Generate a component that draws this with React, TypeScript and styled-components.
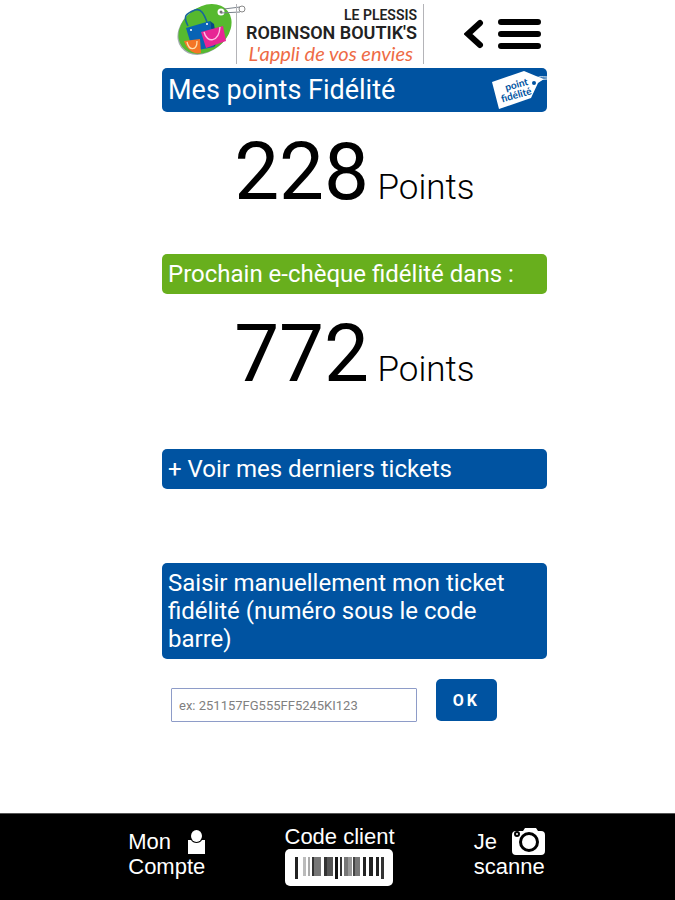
import React from 'react';
import styled, { createGlobalStyle } from 'styled-components';

const BLUE = '#0053a1';
const GREEN = '#68af1d';

const GlobalStyle = createGlobalStyle`
  *, *::before, *::after { box-sizing: border-box; }
  body {
    margin: 0;
    background: #fff;
    color: #000;
    font-family: Roboto, "Liberation Sans", sans-serif;
  }
  svg { display: block; flex: none; }
`;

const Page = styled.div`
  display: flex;
  flex-direction: column;
  min-height: 100vh;
`;

const Content = styled.div`
  margin: 0 19% 0 24%;
`;

const Header = styled.header`
  display: flex;
  align-items: center;
  justify-content: space-between;
  height: 68px;
  padding: 0 6px 0 12px;
`;

const Brand = styled.a`
  display: flex;
  align-items: center;
  color: #222;
  text-decoration: none;
`;

const BrandText = styled.span`
  display: flex;
  flex-direction: column;
  align-items: flex-end;
  height: 60px;
  margin-left: -10px;
  padding: 3px 6px 0 9px;
  border: solid #b4b4b8;
  border-width: 0 1px;
  white-space: nowrap;
`;

const BrandTop = styled.span`
  font-size: 14px;
  line-height: 16px;
  font-weight: 600;
`;

const BrandName = styled.span`
  font-size: 18px;
  line-height: 20px;
  font-weight: 600;
`;

const BrandSlogan = styled.span`
  padding-right: 4px;
  color: #ee6b45;
  font-family: Lato, sans-serif;
  font-size: 20px;
  line-height: 20px;
  font-style: italic;
`;

const HeaderActions = styled.div`
  display: flex;
  align-items: center;
  gap: 14px;
`;

const IconButton = styled.button`
  padding: 0;
  border: 0;
  background: none;
  color: #000;
  cursor: pointer;
`;

const Banner = styled.h2<{ $color?: string; $large?: boolean }>`
  display: flex;
  align-items: center;
  justify-content: space-between;
  margin: 0;
  padding: ${p => (p.$large ? '0 0 0 6px' : '6px')};
  min-height: ${p => (p.$large ? '44px' : '40px')};
  border-radius: 5px;
  background: ${p => p.$color ?? BLUE};
  color: #fff;
  font-size: ${p => (p.$large ? '27px' : '24px')};
  line-height: 28px;
  font-weight: 400;
`;

const TicketsButton = styled.button`
  display: block;
  width: 100%;
  height: 40px;
  margin-bottom: 74px;
  padding: 0 6px;
  border: 0;
  border-radius: 5px;
  background: ${BLUE};
  color: #fff;
  font: inherit;
  font-size: 24px;
  line-height: 28px;
  text-align: left;
  cursor: pointer;
`;

const Score = styled.p<{ $space: number }>`
  margin: 0;
  height: ${p => p.$space}px;
  padding-top: 13px;
  text-align: center;
  font-size: 35px;
  line-height: 94px;
  font-weight: 300;
  white-space: nowrap;
`;

const ScoreValue = styled.span`
  font-size: 80px;
  font-weight: 400;
`;

const Form = styled.form`
  display: flex;
  align-items: flex-start;
  gap: 19px;
  margin-top: 20px;
  padding: 0 50px 0 9px;
`;

const TicketInput = styled.input`
  flex: 1;
  min-width: 0;
  height: 34px;
  margin-top: 9px;
  padding: 0 7px;
  border: 1px solid #8e9cc8;
  border-radius: 1px;
  font: inherit;
  font-size: 13px;
  &::placeholder { color: #808080; opacity: 1; }
`;

const OkButton = styled.button`
  width: 61px;
  height: 42px;
  padding: 0;
  border: 0;
  border-radius: 5px;
  background: ${BLUE};
  color: #fff;
  font: inherit;
  font-size: 16px;
  font-weight: 700;
  letter-spacing: 3px;
  cursor: pointer;
`;

const Footer = styled.footer`
  display: flex;
  justify-content: space-between;
  align-items: flex-start;
  height: 87px;
  margin-top: auto;
  padding: 10px calc(19% + 2px) 0 19%;
  border-top: 1px solid #555;
  background: #000;
`;

const FooterLink = styled.a`
  display: flex;
  flex-direction: column;
  color: #fff;
  font-family: "Liberation Sans", Arial, sans-serif;
  font-size: 22px;
  line-height: 25px;
  text-decoration: none;
`;

const FooterLine = styled.span`
  display: flex;
  align-items: center;
  justify-content: space-between;
  height: 25px;
`;

const SideLink = styled(FooterLink)`
  padding-top: 5px;
`;

const LogoMark = () => (
  <svg width="72" height="60" viewBox="0 0 72 60" aria-hidden="true">
    <ellipse cx="30" cy="26" rx="29" ry="22" transform="rotate(-38 30 26)" fill="#a3adb2" />
    <ellipse cx="31" cy="25" rx="29" ry="22" transform="rotate(-38 31 25)" fill="#56b92f" />
    <path d="M14 22C9 12 11 10 21 6c6-2 9 4 12 12" fill="none" stroke="#17669a" strokeWidth="1.6" />
    <path d="M12 24l24-7 4 26-21 4z" fill="#0863b4" />
    <path d="M36 17l4 26 3-4-3-19z" fill="#064887" />
    <path d="M27 28l22-6 3 15-20 7z" fill="#e72694" />
    <path d="M30 28c3 12 15 10 16-5" fill="none" stroke="#ffc0e5" strokeWidth="1.4" />
    <path d="M10 37l16-2 1 14c-7 2-14-3-17-12z" fill="#f47525" />
    <path d="M13 38c2 9 10 9 10-1" fill="none" stroke="#ffe0ae" strokeWidth="1.3" />
    <circle cx="17" cy="26" r="1" fill="#fff" />
    <circle cx="33" cy="20" r="1" fill="#fff" />
    <circle cx="47" cy="8" r="3.5" fill="#fff" />
    <path d="M47 9l19-1M50 5l16-2" fill="none" stroke="#79818a" strokeWidth="1" />
    <circle cx="47" cy="8" r="1.5" fill="#777" />
    <circle cx="68" cy="5" r="3" fill="#fff" stroke="#888" strokeWidth="1" />
  </svg>
);

const FidelityTag = () => (
  <svg width="57" height="44" viewBox="0 0 57 44" role="img" aria-label="point fidélité">
    <path d="M2 14L34 3l12 5 8 3-6 4-7 15-32 11z" fill="#fff" />
    <circle cx="44" cy="15" r="2" fill={BLUE} />
    <path d="M47 10c3-2 5-1 10-1M47 14c3-2 5-3 10-3" fill="none" stroke="#fff" strokeWidth="1" />
    <g transform="rotate(-16 27 22)" fill={BLUE} fontFamily="Lato, sans-serif" fontWeight="700" textAnchor="middle">
      <text x="28" y="20" fontSize="10">point</text>
      <text x="25" y="30" fontSize="10">fidélité</text>
    </g>
  </svg>
);

const BackIcon = () => (
  <svg width="20" height="30" viewBox="0 0 20 30" aria-hidden="true">
    <path d="M16 4L4 15l12 11" fill="none" stroke="currentColor" strokeWidth="6" strokeLinecap="round" strokeLinejoin="miter" />
  </svg>
);

const MenuIcon = () => (
  <svg width="43" height="32" viewBox="0 0 43 32" aria-hidden="true">
    <path d="M3 4h37M3 16h37M3 28h37" stroke="currentColor" strokeWidth="6" strokeLinecap="round" />
  </svg>
);

const PersonIcon = () => (
  <svg width="17" height="24" viewBox="0 0 17 24" aria-hidden="true">
    <path d="M0 10h3c2 4 9 4 11 0h3v14H0z" fill="#fff" />
    <ellipse cx="8.500" cy="6" rx="5.500" ry="6" fill="#fff" />
  </svg>
);

const CameraIcon = () => (
  <svg width="33" height="28" viewBox="0 0 33 28" aria-hidden="true">
    <path d="M4 3h7l2-3h11l2 3h3q4 0 4 4v16q0 4-4 4H4q-4 0-4-4V7q0-4 4-4z" fill="#fff" />
    <circle cx="17" cy="14" r="8.500" fill="#fff" stroke="#000" strokeWidth="3" />
    <circle cx="5" cy="6" r="2" fill="#fff" stroke="#000" strokeWidth="2" />
  </svg>
);

const BARS: [number, number, string][] = [
  [10, 3, '#222'], [18, 3, '#bbb'], [23, 2, '#aaa'], [27, 2, '#333'], [29, 7, '#777'],
  [39, 3, '#333'], [42, 6, '#555'], [50, 3, '#111'], [55, 2, '#333'], [59, 4, '#777'],
  [63, 4, '#999'], [68, 2, '#444'], [70, 5, '#777'], [78, 3, '#222'], [84, 4, '#222'],
  [91, 3, '#222'], [96, 3, '#333'],
];

const Barcode = () => (
  <svg width="108" height="37" viewBox="0 0 108 37" aria-hidden="true">
    <rect width="108" height="37" rx="5" fill="#fff" />
    {BARS.map(([x, w, fill]) => (
      <rect key={x} x={x} y="8" width={w} height={x === 10 || x === 50 || x === 96 ? 22 : 19} fill={fill} />
    ))}
  </svg>
);

export default function App() {
  return (
    <Page>
      <GlobalStyle />
      <Content>
        <Header>
          <Brand href="#">
            <LogoMark />
            <BrandText>
              <BrandTop>LE PLESSIS</BrandTop>
              <BrandName>ROBINSON BOUTIK'S</BrandName>
              <BrandSlogan>L'appli de vos envies</BrandSlogan>
            </BrandText>
          </Brand>
          <HeaderActions>
            <IconButton type="button" aria-label="Retour"><BackIcon /></IconButton>
            <IconButton type="button" aria-label="Menu"><MenuIcon /></IconButton>
          </HeaderActions>
        </Header>
        <main>
          <Banner $large>Mes points Fidélité<FidelityTag /></Banner>
          <Score $space={142}><ScoreValue>228</ScoreValue> Points</Score>
          <Banner $color={GREEN}>Prochain e-chèque fidélité dans :</Banner>
          <Score $space={155}><ScoreValue>772</ScoreValue> Points</Score>
          <TicketsButton type="button">+ Voir mes derniers tickets</TicketsButton>
          <Banner as="label" htmlFor="ticket">
            Saisir manuellement mon ticket fidélité (numéro sous le code barre)
          </Banner>
          <Form onSubmit={e => e.preventDefault()}>
            <TicketInput id="ticket" placeholder="ex: 251157FG555FF5245KI123" />
            <OkButton type="submit">OK</OkButton>
          </Form>
        </main>
      </Content>
      <Footer>
        <SideLink href="#compte">
          <FooterLine>Mon<PersonIcon /></FooterLine>
          <span>Compte</span>
        </SideLink>
        <FooterLink href="#code">
          <span>Code client</span>
          <Barcode />
        </FooterLink>
        <SideLink href="#scanne">
          <FooterLine>Je<CameraIcon /></FooterLine>
          <span>scanne</span>
        </SideLink>
      </Footer>
    </Page>
  );
}
